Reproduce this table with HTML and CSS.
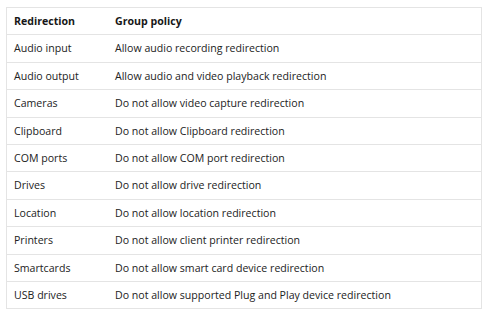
FILE: index.html
```html
<!DOCTYPE html>
<html lang="en">
<head>
  <meta charset="UTF-8">
  <title>Device redirection policies</title>
  <link rel="stylesheet" href="styles.css">
</head>
<body>
  <table class="policy-table">
    <thead>
      <tr>
        <th class="col-name">Redirection</th>
        <th>Group policy</th>
      </tr>
    </thead>
    <tbody>
      <tr><td>Audio input</td><td>Allow audio recording redirection</td></tr>
      <tr><td>Audio output</td><td>Allow audio and video playback redirection</td></tr>
      <tr><td>Cameras</td><td>Do not allow video capture redirection</td></tr>
      <tr><td>Clipboard</td><td>Do not allow Clipboard redirection</td></tr>
      <tr><td>COM ports</td><td>Do not allow COM port redirection</td></tr>
      <tr><td>Drives</td><td>Do not allow drive redirection</td></tr>
      <tr><td>Location</td><td>Do not allow location redirection</td></tr>
      <tr><td>Printers</td><td>Do not allow client printer redirection</td></tr>
      <tr><td>Smartcards</td><td>Do not allow smart card device redirection</td></tr>
      <tr><td>USB drives</td><td>Do not allow supported Plug and Play device redirection</td></tr>
    </tbody>
  </table>
</body>
</html>
```

FILE: styles.css
```css
body {
  margin: 0;
  padding: 7px 8px 0 6px;
  background: #fff;
  font-family: 'Open Sans', 'Noto Sans', sans-serif;
  font-size: 10.6px;
  color: #222;
}
.policy-table {
  width: 476px;
  table-layout: fixed;
  border-collapse: collapse;
  border: 1px solid #e4e4e4;
}
.policy-table th,
.policy-table td {
  text-align: left;
  padding: 6px 7px;
  line-height: 14.4px;
  border-bottom: 1px solid #e4e4e4;
  white-space: nowrap;
}
.policy-table th {
  font-weight: 700;
  color: #171717;
}
.col-name {
  width: 87px;
}
```
